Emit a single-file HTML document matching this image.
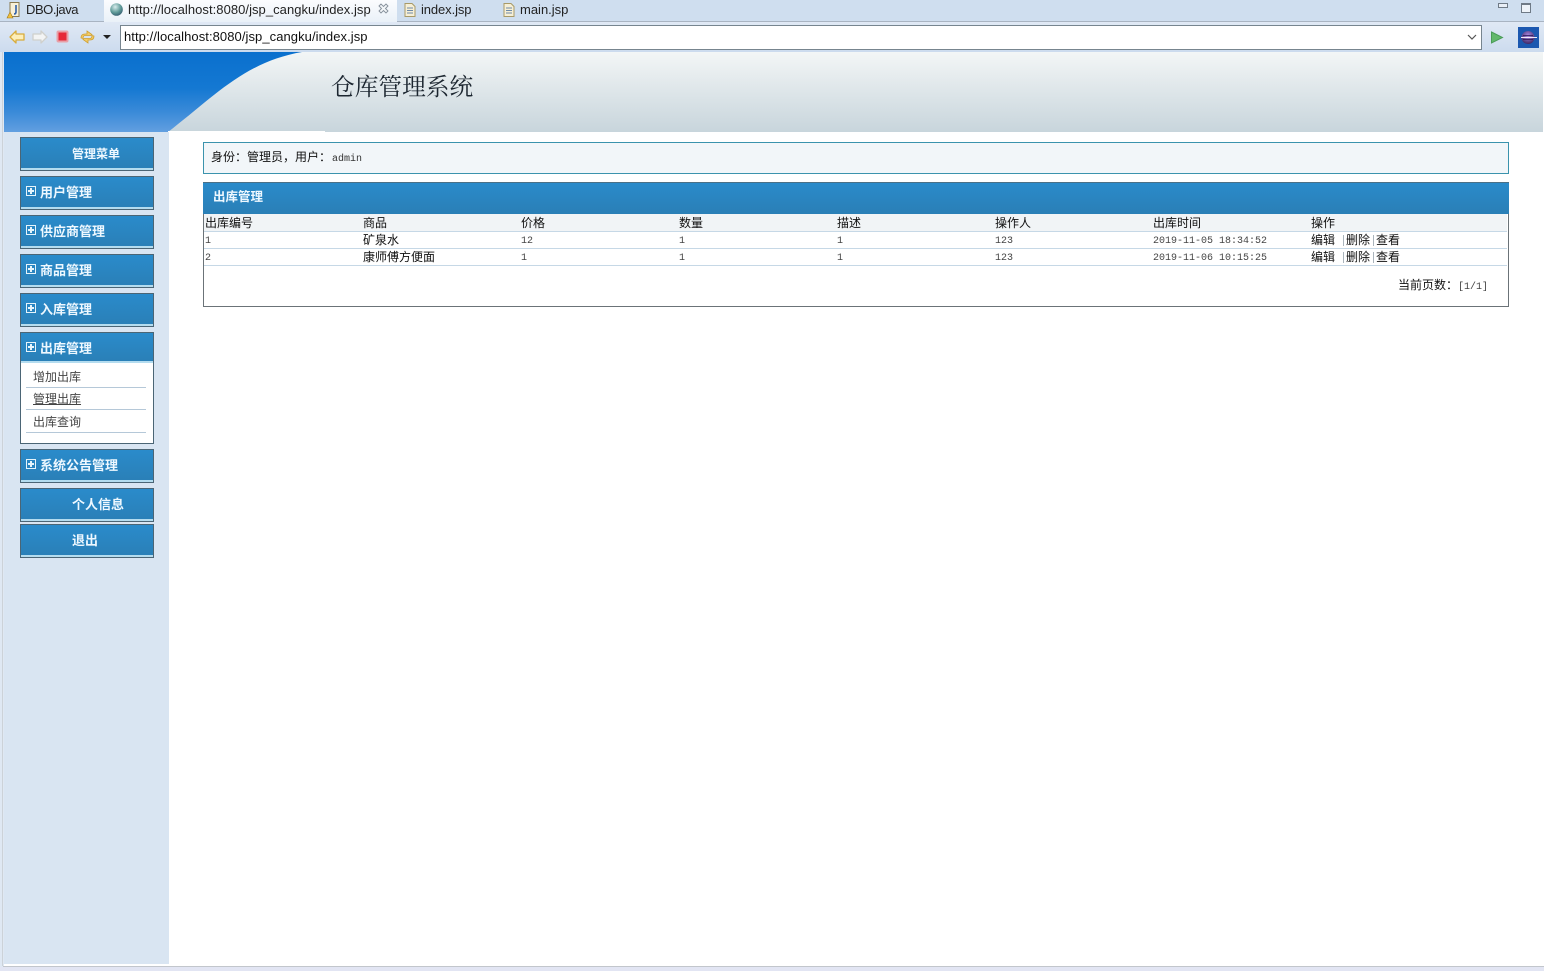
<!DOCTYPE html>
<html>
<head>
<meta charset="utf-8">
<style>
html,body{margin:0;padding:0;width:1544px;height:971px;overflow:hidden;background:#fff;font-family:"Liberation Sans","WenQuanYi Zen Hei",sans-serif;}
.a{position:absolute;white-space:nowrap;}
.cj{font-family:"WenQuanYi Zen Hei","Noto Sans CJK SC",sans-serif;font-size:12px;line-height:14px;color:#111;}
.mo{font-family:"Liberation Mono","WenQuanYi Zen Hei",monospace;font-size:10px;line-height:14px;color:#444;}
.tab{font-family:"Liberation Sans",sans-serif;font-size:13px;line-height:16px;color:#222;}
.btn{position:absolute;left:20px;width:132px;height:32px;border:1px solid #4b6575;background:linear-gradient(#2a8bcb,#2a7fb6);box-shadow:inset 0 -2px 0 #b4dcef;}
.btn span{position:absolute;top:7px;color:#eef8ff;font:bold 13px/16px "WenQuanYi Zen Hei","Noto Sans CJK SC",sans-serif;white-space:nowrap;}
.plus{position:absolute;left:5px;top:9px;width:8px;height:8px;border:1px solid #e6f4fb;}
.plus:before{content:"";position:absolute;left:1px;top:3px;width:6px;height:2px;background:#e6f4fb;}
.plus:after{content:"";position:absolute;left:3px;top:1px;width:2px;height:6px;background:#e6f4fb;}
.sub{position:absolute;left:33px;font:12px/14px "WenQuanYi Zen Hei","Noto Sans CJK SC",sans-serif;color:#444;white-space:nowrap;}
.ln{position:absolute;height:1px;}
</style>
</head>
<body>
<!-- Top frame -->
<div class="a" style="left:0;top:0;width:1544px;height:21px;background:#cfdeef;"></div>
<div class="a" style="left:0;top:21px;width:1544px;height:1px;background:#a9b4c2;"></div>
<div class="a" style="left:0;top:22px;width:1544px;height:30px;background:linear-gradient(#e0e9f5,#ccdbee);"></div>
<div class="a" style="left:0;top:52px;width:4px;height:919px;background:#dfe8f3;"></div>
<div class="a" style="left:2px;top:52px;width:1px;height:914px;background:#ccd2d8;"></div>

<!-- Tabs -->
<div class="a" style="left:104px;top:0;width:293px;height:22px;background:linear-gradient(#fbfcfe,#eaf1f8);"></div>
<svg class="a" style="left:6px;top:1px" width="16" height="18" viewBox="0 0 16 18"><path d="M4 1.500h9v14H4z" fill="#f8f0d8" stroke="#8a7a50"/><path d="M10 4v7q0 2-2 2" fill="none" stroke="#3060a8" stroke-width="1.600"/><path d="M1 17l3-6 3 6z" fill="#f0c040" stroke="#a07818" stroke-width=".6"/></svg>
<div class="a tab" style="left:26px;top:2px;letter-spacing:-.45px;">DBO.java</div>
<svg class="a" style="left:110px;top:3px" width="13" height="13" viewBox="0 0 13 13"><defs><radialGradient id="g" cx=".4" cy=".3" r=".8"><stop offset="0" stop-color="#d8ecec"/><stop offset=".55" stop-color="#5f9a98"/><stop offset="1" stop-color="#2c5068"/></radialGradient></defs><circle cx="6.500" cy="6.500" r="6.300" fill="url(#g)"/></svg>
<div class="a tab" style="left:128px;top:2px;letter-spacing:.05px;">http://localhost:8080/jsp_cangku/index.jsp</div>
<svg class="a" style="left:378px;top:3px" width="11" height="11" viewBox="0 0 11 11"><path d="M1 3l2-2 2.500 2.500L8 1l2 2-2.500 2.500L10 8l-2 2-2.500-2.500L3 10 1 8l2.500-2.500z" fill="#f2f5f8" stroke="#858f9a" stroke-width=".9"/></svg>
<svg class="a" style="left:404px;top:3px" width="12" height="14" viewBox="0 0 12 14"><path d="M1 .5h7l3 3v10H1z" fill="#f6efd6" stroke="#a89a68"/><path d="M3 5h6M3 7.500h6M3 10h6" stroke="#6d8aa8"/></svg>
<div class="a tab" style="left:421px;top:2px;letter-spacing:-.1px;">index.jsp</div>
<svg class="a" style="left:503px;top:3px" width="12" height="14" viewBox="0 0 12 14"><path d="M1 .5h7l3 3v10H1z" fill="#f6efd6" stroke="#a89a68"/><path d="M3 5h6M3 7.500h6M3 10h6" stroke="#6d8aa8"/></svg>
<div class="a tab" style="left:520px;top:2px;">main.jsp</div>
<div class="a" style="left:1498px;top:3px;width:8px;height:3px;border:1px solid #6f7a86;background:#e8eef6;"></div>
<div class="a" style="left:1521px;top:3px;width:8px;height:7px;border:1px solid #6f7a86;border-top-width:2px;background:#eef3f9;"></div>

<!-- Toolbar -->
<svg class="a" style="left:9px;top:29px" width="16" height="16" viewBox="0 0 16 16"><path d="M1 8l6-6v3h8v6H7v3z" fill="#fdeeb8" stroke="#d8ac3c" stroke-width="1.300" stroke-linejoin="round"/></svg>
<svg class="a" style="left:32px;top:29px" width="16" height="16" viewBox="0 0 16 16"><path d="M15 8L9 2v3H1v6h8v3z" fill="#f3f4f4" stroke="#cfd0cc" stroke-width="1.300" stroke-linejoin="round"/></svg>
<svg class="a" style="left:56px;top:30px" width="13" height="13" viewBox="0 0 13 13"><rect x=".5" y=".5" width="12" height="12" rx="2" fill="#e8a0a8"/><rect x="2.500" y="2.500" width="8" height="8" fill="#e62838"/></svg>
<svg class="a" style="left:79px;top:28px" width="17" height="17" viewBox="0 0 17 17"><path d="M2 10q0-4 4-4h2V3l5 3.500-1 1H6q-2 0-2 3z" fill="#f2cc68" stroke="#cf9f30" stroke-width=".8"/><path d="M15 8q0 4-4 4H9v3l-5-3.500 1-1h6q2 0 2-3z" fill="#f2cc68" stroke="#cf9f30" stroke-width=".8"/></svg>
<svg class="a" style="left:103px;top:35px" width="8" height="4" viewBox="0 0 8 4"><path d="M0 0h8L4 4z" fill="#222"/></svg>
<div class="a" style="left:120px;top:25px;width:1360px;height:23px;border:1px solid #77858f;background:#fff;"></div>
<div class="a tab" style="left:124px;top:29px;color:#111;letter-spacing:.07px;">http://localhost:8080/jsp_cangku/index.jsp</div>
<svg class="a" style="left:1467px;top:34px" width="10" height="7" viewBox="0 0 10 7"><path d="M1 1l4 4 4-4" fill="none" stroke="#555" stroke-width="1.200"/></svg>
<svg class="a" style="left:1490px;top:31px" width="14" height="13" viewBox="0 0 14 13"><path d="M1.500 1l11 5.500-11 5.500z" fill="#63b86c" stroke="#4a9c58"/></svg>
<svg class="a" style="left:1518px;top:27px" width="21" height="21" viewBox="0 0 21 21"><defs><radialGradient id="e" cx=".5" cy=".35" r=".7"><stop offset="0" stop-color="#a888e0"/><stop offset="1" stop-color="#38205c"/></radialGradient></defs><rect width="21" height="21" fill="#1c58b0"/><circle cx="10" cy="10.500" r="6.500" fill="url(#e)"/><path d="M3 10.500h16" stroke="#f0e8f8" stroke-width="1"/><path d="M5 8.500h10" stroke="#2a1a54" stroke-width=".8"/><path d="M5 12.500h10" stroke="#2a1a54" stroke-width=".8"/></svg>

<!-- Header -->
<div class="a" style="left:4px;top:52px;width:1539px;height:80px;background:linear-gradient(#f3f6f6,#c8d5dc);"></div>
<svg class="a" style="left:4px;top:52px" width="300" height="80" viewBox="0 0 300 80"><defs><linearGradient id="b" x1="0" y1="0" x2="0" y2="1"><stop offset="0" stop-color="#0a70ce"/><stop offset=".45" stop-color="#1478d2"/><stop offset=".75" stop-color="#3a8ad8"/><stop offset="1" stop-color="#629fe0"/></linearGradient></defs><path d="M0 0H298C240 10 210 45 164 80H0z" fill="url(#b)"/></svg>
<div class="a" style="left:331px;top:71px;font:23.700px/29px 'Noto Serif CJK SC','WenQuanYi Zen Hei',serif;color:#1c2630;">仓库管理系统</div>
<div class="a" style="left:168px;top:131px;width:157px;height:1px;background:#fff;"></div>

<!-- Sidebar -->
<div class="a" style="left:4px;top:132px;width:165px;height:832px;background:#d9e5f2;"></div>

<div class="btn" style="top:137px;"><span style="left:51px;top:8px;font-size:12px;">管理菜单</span></div>
<div class="btn" style="top:176px;"><i class="plus"></i><span style="left:19px;">用户管理</span></div>
<div class="btn" style="top:215px;"><i class="plus"></i><span style="left:19px;">供应商管理</span></div>
<div class="btn" style="top:254px;"><i class="plus"></i><span style="left:19px;">商品管理</span></div>
<div class="btn" style="top:293px;"><i class="plus"></i><span style="left:19px;">入库管理</span></div>
<div class="a" style="left:20px;top:332px;width:132px;height:110px;border:1px solid #4b6575;background:#fff;"></div>
<div class="btn" style="top:332px;height:30px;border-bottom:0;"><i class="plus"></i><span style="left:19px;">出库管理</span></div>
<div class="sub" style="top:370px;">增加出库</div>
<div class="ln" style="left:26px;top:387px;width:120px;background:#b5c8d8;"></div>
<div class="sub" style="top:392px;text-decoration:underline;">管理出库</div>
<div class="ln" style="left:26px;top:409px;width:120px;background:#b5c8d8;"></div>
<div class="sub" style="top:415px;">出库查询</div>
<div class="ln" style="left:26px;top:432px;width:120px;background:#b5c8d8;"></div>
<div class="btn" style="top:449px;"><i class="plus"></i><span style="left:19px;">系统公告管理</span></div>
<div class="btn" style="top:488px;"><span style="left:51px;">个人信息</span></div>
<div class="btn" style="top:524px;"><span style="left:51px;">退出</span></div>

<!-- Identity bar -->
<div class="a" style="left:203px;top:142px;width:1304px;height:30px;border:1px solid #3b93ad;background:#f2f6f9;"></div>
<div class="a cj" style="left:211px;top:150px;">身份：管理员，用户：<span class="mo" style="color:#333;position:relative;top:0;left:1px;">admin</span></div>

<!-- Main panel -->
<div class="a" style="left:203px;top:182px;width:1304px;height:123px;border:1px solid #6b7378;background:#fff;"></div>
<div class="a" style="left:203px;top:182px;width:1306px;height:32px;background:linear-gradient(#2a8bcb,#2a7fb6);box-shadow:inset 0 1px 0 #4b7086;"></div>
<div class="a" style="left:213px;top:188px;color:#eef8ff;font:bold 12.500px/16px 'WenQuanYi Zen Hei','Noto Sans CJK SC',sans-serif;">出库管理</div>
<div class="a" style="left:204px;top:214px;width:1303px;height:17px;background:#f1f4f6;"></div>
<div class="ln" style="left:204px;top:231px;width:1303px;background:#c6d8e6;"></div>
<div class="ln" style="left:204px;top:248px;width:1303px;background:#c6d8e6;"></div>
<div class="ln" style="left:204px;top:265px;width:1303px;background:#c6d8e6;"></div>

<div class="a cj" style="left:205px;top:216px;">出库编号</div>
<div class="a cj" style="left:363px;top:216px;">商品</div>
<div class="a cj" style="left:521px;top:216px;">价格</div>
<div class="a cj" style="left:679px;top:216px;">数量</div>
<div class="a cj" style="left:837px;top:216px;">描述</div>
<div class="a cj" style="left:995px;top:216px;">操作人</div>
<div class="a cj" style="left:1153px;top:216px;">出库时间</div>
<div class="a cj" style="left:1311px;top:216px;">操作</div>

<div class="a mo" style="left:205px;top:235px;">1</div>
<div class="a cj" style="left:363px;top:233px;">矿泉水</div>
<div class="a mo" style="left:521px;top:235px;">12</div>
<div class="a mo" style="left:679px;top:235px;">1</div>
<div class="a mo" style="left:837px;top:235px;">1</div>
<div class="a mo" style="left:995px;top:235px;">123</div>
<div class="a mo" style="left:1153px;top:235px;">2019-11-05 18:34:52</div>
<div class="a cj" style="left:1311px;top:233px;">编辑</div>
<div class="ln" style="left:1343px;top:235px;width:1px;height:11px;background:#aab4bc;"></div>
<div class="a cj" style="left:1346px;top:233px;">删除</div>
<div class="ln" style="left:1373px;top:235px;width:1px;height:11px;background:#aab4bc;"></div>
<div class="a cj" style="left:1376px;top:233px;">查看</div>

<div class="a mo" style="left:205px;top:252px;">2</div>
<div class="a cj" style="left:363px;top:250px;">康师傅方便面</div>
<div class="a mo" style="left:521px;top:252px;">1</div>
<div class="a mo" style="left:679px;top:252px;">1</div>
<div class="a mo" style="left:837px;top:252px;">1</div>
<div class="a mo" style="left:995px;top:252px;">123</div>
<div class="a mo" style="left:1153px;top:252px;">2019-11-06 10:15:25</div>
<div class="a cj" style="left:1311px;top:250px;">编辑</div>
<div class="ln" style="left:1343px;top:252px;width:1px;height:11px;background:#aab4bc;"></div>
<div class="a cj" style="left:1346px;top:250px;">删除</div>
<div class="ln" style="left:1373px;top:252px;width:1px;height:11px;background:#aab4bc;"></div>
<div class="a cj" style="left:1376px;top:250px;">查看</div>

<div class="a cj" style="left:1398px;top:278px;">当前页数：<span class="mo" style="position:relative;left:0;">[1/1]</span></div>

<!-- Bottom -->
<div class="a" style="left:3px;top:966px;width:1541px;height:1px;background:#c2c6cc;"></div>
<div class="a" style="left:0;top:967px;width:1544px;height:4px;background:#e2e5f3;"></div>
</body>
</html>
